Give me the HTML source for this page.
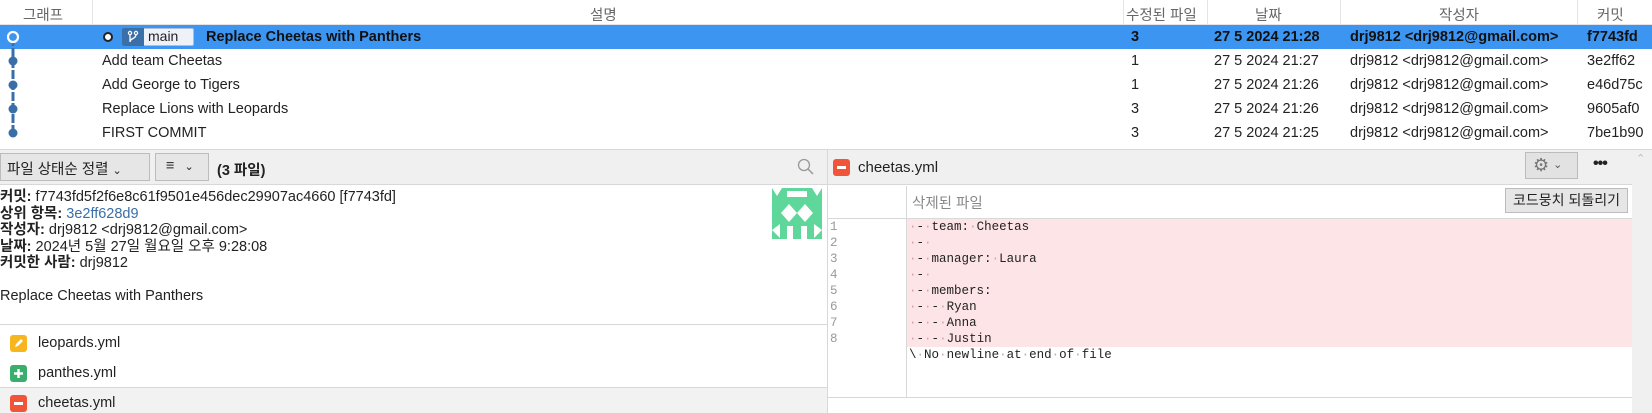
<!DOCTYPE html>
<html><head><meta charset="utf-8"><style>
*{margin:0;padding:0;box-sizing:border-box}
body{width:1652px;height:413px;overflow:hidden;background:#fff;font-family:"Liberation Sans","Noto Sans CJK KR",sans-serif;font-size:14.5px;color:#222;position:relative}
.a{position:absolute;white-space:nowrap}
.hdr{color:#666;font-size:14.5px}
.row{position:absolute;left:0;width:1652px;height:24px}
.t{position:absolute;top:4px;white-space:nowrap}
.mono{font-family:"Liberation Mono",monospace;font-size:12.5px}
.dot{color:#c8a8a8}
</style></head><body>
<div class="a" style="left:0;top:0;width:1652px;height:25px;border-bottom:1px solid #e4e4e4"></div>
<div class="a" style="left:92px;top:0;width:1px;height:24px;background:#e4e4e4"></div>
<div class="a" style="left:1123px;top:0;width:1px;height:24px;background:#e4e4e4"></div>
<div class="a" style="left:1207px;top:0;width:1px;height:24px;background:#e4e4e4"></div>
<div class="a" style="left:1340px;top:0;width:1px;height:24px;background:#e4e4e4"></div>
<div class="a" style="left:1577px;top:0;width:1px;height:24px;background:#e4e4e4"></div>
<div class="a hdr" style="left:23px;top:4px">그래프</div>
<div class="a hdr" style="left:590px;top:4px">설명</div>
<div class="a hdr" style="left:1126px;top:4px">수정된 파일</div>
<div class="a hdr" style="left:1255px;top:4px">날짜</div>
<div class="a hdr" style="left:1439px;top:4px">작성자</div>
<div class="a hdr" style="left:1597px;top:4px">커밋</div>

<div class="row" style="top:25px;background:#3d95f2;font-weight:bold;color:#111">
 <div class="a" style="left:103px;top:7px;width:10px;height:10px;border:2.5px solid #222;border-radius:50%;background:#fff"></div>
 <div class="a" style="left:122px;top:3px;width:72px;height:18px;background:#eef2f8;border:1px solid #a8c0dc;border-radius:2px"></div>
 <div class="a" style="left:122px;top:3px;width:22px;height:18px;background:#3b6fa8;border-radius:2px 0 0 2px"><svg width="22" height="18"><circle cx="8" cy="5" r="1.6" fill="none" stroke="#fff" stroke-width="1.2"/><circle cx="14" cy="5" r="1.6" fill="none" stroke="#fff" stroke-width="1.2"/><path d="M8 6.6V14M14 6.6C14 11 8 10 8 14" fill="none" stroke="#fff" stroke-width="1.3"/></svg></div>
 <div class="t" style="left:148px;font-weight:normal;color:#222;font-size:14px;top:3px">main</div>
 <div class="t" style="left:206px">Replace Cheetas with Panthers</div>
 <div class="t" style="left:1131px">3</div>
 <div class="t" style="left:1214px">27 5 2024 21:28</div>
 <div class="t" style="left:1350px">drj9812 &lt;drj9812@gmail.com&gt;</div>
 <div class="t" style="left:1587px">f7743fd</div>
</div>
<div class="row" style="top:49px"><div class="t" style="left:102px">Add team Cheetas</div><div class="t" style="left:1131px">1</div><div class="t" style="left:1214px">27 5 2024 21:27</div><div class="t" style="left:1350px">drj9812 &lt;drj9812@gmail.com&gt;</div><div class="t" style="left:1587px">3e2ff62</div></div>
<div class="row" style="top:73px"><div class="t" style="left:102px">Add George to Tigers</div><div class="t" style="left:1131px">1</div><div class="t" style="left:1214px">27 5 2024 21:26</div><div class="t" style="left:1350px">drj9812 &lt;drj9812@gmail.com&gt;</div><div class="t" style="left:1587px">e46d75c</div></div>
<div class="row" style="top:97px"><div class="t" style="left:102px">Replace Lions with Leopards</div><div class="t" style="left:1131px">3</div><div class="t" style="left:1214px">27 5 2024 21:26</div><div class="t" style="left:1350px">drj9812 &lt;drj9812@gmail.com&gt;</div><div class="t" style="left:1587px">9605af0</div></div>
<div class="row" style="top:121px"><div class="t" style="left:102px">FIRST COMMIT</div><div class="t" style="left:1131px">3</div><div class="t" style="left:1214px">27 5 2024 21:25</div><div class="t" style="left:1350px">drj9812 &lt;drj9812@gmail.com&gt;</div><div class="t" style="left:1587px">7be1b90</div></div>

<svg class="a" style="left:0;top:25px" width="30" height="125">
 <line x1="13" y1="12" x2="13" y2="108" stroke="#3a6ea8" stroke-width="3" stroke-dasharray="9,2"/>
 <circle cx="13" cy="12" r="5" fill="#3d95f2" stroke="#fff" stroke-width="2.2"/>
 <circle cx="13" cy="36" r="4.5" fill="#3a6ea8"/>
 <circle cx="13" cy="60" r="4.5" fill="#3a6ea8"/>
 <circle cx="13" cy="84" r="4.5" fill="#3a6ea8"/>
 <circle cx="13" cy="108" r="4.5" fill="#3a6ea8"/>
</svg>

<div class="a" style="left:0;top:149px;width:1652px;height:1px;background:#d8d8d8"></div>

<div class="a" style="left:0;top:150px;width:827px;height:35px;background:#f0f0f0;border-bottom:1px solid #d8d8d8"></div>
<div class="a" style="left:0;top:153px;width:150px;height:28px;background:#e6e6e6;border:1px solid #bcbcbc;padding:4px 0 0 6px">파일 상태순 정렬 <span style="font-size:11px">&#8964;</span></div>
<div class="a" style="left:155px;top:153px;width:54px;height:28px;background:#e6e6e6;border:1px solid #bcbcbc;padding:4px 0 0 10px">&#8801; <span style="font-size:11px;margin-left:6px">&#8964;</span></div>
<div class="a" style="left:217px;top:159px;font-weight:bold">(3 파일)</div>
<svg class="a" style="left:797px;top:158px" width="18" height="18"><circle cx="7" cy="7" r="5.5" fill="none" stroke="#999" stroke-width="1.3"/><line x1="11" y1="11" x2="16" y2="16" stroke="#999" stroke-width="1.5"/></svg>

<div class="a" style="left:0;top:189px;line-height:16.5px;font-size:14.5px">
<b>커밋:</b> f7743fd5f2f6e8c61f9501e456dec29907ac4660 [f7743fd]<br>
<b>상위 항목:</b> <span style="color:#3a6ea8">3e2ff628d9</span><br>
<b>작성자:</b> drj9812 &lt;drj9812@gmail.com&gt;<br>
<b>날짜:</b> 2024년 5월 27일 월요일 오후 9:28:08<br>
<b>커밋한 사람:</b> drj9812<br><br>
Replace Cheetas with Panthers
</div>
<svg class="a" style="left:772px;top:188px" width="50" height="51">
 <rect width="50" height="51" fill="#5fd69a"/>
 <polygon points="0,0 10,0 5,8" fill="#fff"/><polygon points="40,0 50,0 45,8" fill="#fff"/>
 <rect x="15" y="3" width="20" height="6" fill="#fff"/>
 <polygon points="17,16 25,25 17,34 9,25" fill="#fff"/><polygon points="33,16 41,25 33,34 25,25" fill="#fff"/>
 <polygon points="0,42 8,36 8,50" fill="#fff"/><polygon points="50,42 42,36 42,50" fill="#fff"/>
 <rect x="15" y="38" width="6" height="13" fill="#fff"/><rect x="29" y="38" width="6" height="13" fill="#fff"/>
</svg>

<div class="a" style="left:0;top:324px;width:827px;height:1px;background:#d8d8d8"></div>
<div class="a" style="left:0;top:387px;width:827px;height:26px;background:#f2f2f2;border-top:1px solid #d8d8d8"></div>
<div class="a" style="left:10px;top:335px;width:17px;height:17px;border-radius:3px;background:#f7b51e"><svg width="17" height="17"><path d="M5 12L6 9L11 4L13 6L8 11Z" fill="#fff"/></svg></div>
<div class="a" style="left:38px;top:335px">leopards.yml</div>
<div class="a" style="left:10px;top:365px;width:17px;height:17px;border-radius:3px;background:#3aae6c"><svg width="17" height="17"><path d="M8.5 4V13M4 8.5H13" stroke="#fff" stroke-width="2.4"/></svg></div>
<div class="a" style="left:38px;top:365px">panthes.yml</div>
<div class="a" style="left:10px;top:395px;width:17px;height:17px;border-radius:3px;background:#f0553a"><div style="position:absolute;left:4px;top:7px;width:9px;height:3px;background:#fff"></div></div>
<div class="a" style="left:38px;top:395px">cheetas.yml</div>

<div class="a" style="left:827px;top:150px;width:1px;height:263px;background:#d8d8d8"></div>
<div class="a" style="left:828px;top:150px;width:804px;height:35px;background:#f0f0f0;border-bottom:1px solid #d8d8d8"></div>
<div class="a" style="left:1632px;top:150px;width:20px;height:263px;background:#f0f0f0"></div>
<div class="a" style="left:1636px;top:152px;color:#bbb;font-size:11px">&#8963;</div>
<div class="a" style="left:833px;top:159px;width:17px;height:17px;border-radius:3px;background:#f0553a"><div style="position:absolute;left:4px;top:7px;width:9px;height:3px;background:#fff"></div></div>
<div class="a" style="left:858px;top:159px;font-size:15px">cheetas.yml</div>
<div class="a" style="left:1525px;top:152px;width:53px;height:27px;background:#e2e2e2;border:1px solid #bcbcbc;padding:2px 0 0 7px;color:#777;font-size:18px">&#9881;<span style="font-size:11px;color:#555;margin-left:4px;vertical-align:3px">&#8964;</span></div>
<div class="a" style="left:1593px;top:155px;font-size:16px;font-weight:bold;letter-spacing:-1px">•••</div>

<div class="a" style="left:906px;top:186px;width:1px;height:211px;background:#d8d8d8"></div>
<div class="a" style="left:828px;top:218px;width:804px;height:1px;background:#d8d8d8"></div>
<div class="a" style="left:912px;top:192px;color:#888">삭제된 파일</div>
<div class="a" style="left:1505px;top:188px;width:123px;height:25px;background:#e6e6e6;border:1px solid #bcbcbc;text-align:center;line-height:23px;font-size:14px">코드뭉치 되돌리기</div>
<div class="a" style="left:907px;top:219px;width:725px;height:128px;background:#fde4e6"></div>
<div class="a mono" style="left:830px;top:219px;line-height:16px;color:#999">1<br>2<br>3<br>4<br>5<br>6<br>7<br>8</div>
<div class="a mono" style="left:909px;top:219px;line-height:16px;color:#222"><span class="dot">·</span>-<span class="dot">·</span>team:<span class="dot">·</span>Cheetas<br><span class="dot">·</span>-<span class="dot">·</span><br><span class="dot">·</span>-<span class="dot">·</span>manager:<span class="dot">·</span>Laura<br><span class="dot">·</span>-<span class="dot">·</span><br><span class="dot">·</span>-<span class="dot">·</span>members:<br><span class="dot">·</span>-<span class="dot">·</span>-<span class="dot">·</span>Ryan<br><span class="dot">·</span>-<span class="dot">·</span>-<span class="dot">·</span>Anna<br><span class="dot">·</span>-<span class="dot">·</span>-<span class="dot">·</span>Justin<br>\<span class="dot">·</span>No<span class="dot">·</span>newline<span class="dot">·</span>at<span class="dot">·</span>end<span class="dot">·</span>of<span class="dot">·</span>file</div>
<div class="a" style="left:828px;top:397px;width:804px;height:1px;background:#d8d8d8"></div>
</body></html>
